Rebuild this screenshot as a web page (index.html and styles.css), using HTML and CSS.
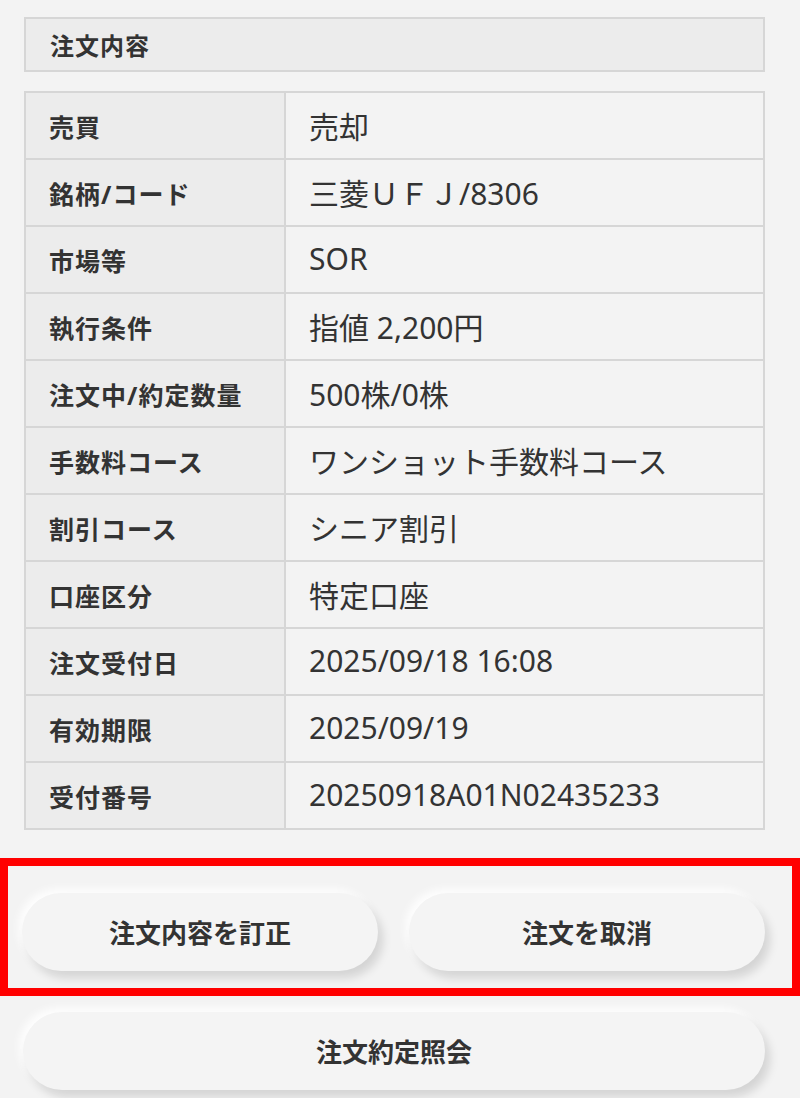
FILE: index.html
```html
<!DOCTYPE html>
<html lang="ja">
<head>
  <meta charset="UTF-8">
  <meta name="viewport" content="width=device-width, initial-scale=1.0">
  <title>注文内容</title>
  <link rel="stylesheet" href="styles.css">
</head>
<body>

  <div class="container">
    <div class="section-title">注文内容</div>

    <table class="order-table">
      <tr><th>売買</th><td>売却</td></tr>
      <tr><th>銘柄/コード</th><td>三菱ＵＦＪ/8306</td></tr>
      <tr><th>市場等</th><td>SOR</td></tr>
      <tr><th>執行条件</th><td>指値 2,200円</td></tr>
      <tr><th>注文中/約定数量</th><td>500株/0株</td></tr>
      <tr><th>手数料コース</th><td>ワンショット手数料コース</td></tr>
      <tr><th>割引コース</th><td>シニア割引</td></tr>
      <tr><th>口座区分</th><td>特定口座</td></tr>
      <tr><th>注文受付日</th><td>2025/09/18 16:08</td></tr>
      <tr><th>有効期限</th><td>2025/09/19</td></tr>
      <tr><th>受付番号</th><td>20250918A01N02435233</td></tr>
    </table>
  </div>

  <!-- 枠で囲んだボタン -->
  <div class="highlight">
    <div class="btn-row">
      <button class="btn">注文内容を訂正</button>
      <button class="btn">注文を取消</button>
    </div>
  </div>

  <div class="bottom">
    <button class="btn btn-wide">注文約定照会</button>
  </div>

</body>
</html>
```

FILE: styles.css
```css
* {
  margin: 0;
  padding: 0;
  box-sizing: border-box;
}

body {
  font-family: "Noto Sans", "Noto Sans CJK JP", sans-serif;
  background-color: #f3f3f3;
  color: #333;
  width: 800px;
  height: 1098px;
  overflow: hidden;
}

.container {
  padding: 17px 35px 0 24px;
}

.section-title {
  height: 55px;
  display: flex;
  align-items: center;
  padding-left: 24px;
  background-color: #ececec;
  border: 2px solid #d6d6d6;
  font-size: 24px;
  font-weight: 700;
  letter-spacing: 1px;
}

.order-table {
  width: 100%;
  margin-top: 19px;
  border-collapse: collapse;
  border: 2px solid #d6d6d6;
}

.order-table th,
.order-table td {
  height: 67px;
  border: 2px solid #d6d6d6;
  padding-left: 23px;
  text-align: left;
  vertical-align: middle;
}

.order-table th {
  width: 260px;
  background-color: #ececec;
  font-size: 25px;
  font-weight: 700;
  letter-spacing: 1px;
}

.order-table td {
  background-color: #f3f3f3;
  font-size: 30px;
  font-weight: 400;
  padding-bottom: 2px;
}

/* 赤枠 */
.highlight {
  margin-top: 28px;
  border: 8px solid #ff0000;
  padding: 27px 27px 17px 14px;
}

.btn-row {
  display: grid;
  grid-template-columns: 1fr 1fr;
  gap: 31px;
}

.btn {
  height: 78px;
  border: none;
  border-radius: 39px;
  background-color: #f4f4f4;
  color: #333;
  font-family: "Noto Sans", "Noto Sans CJK JP", sans-serif;
  font-size: 26px;
  font-weight: 700;
  box-shadow: 5px 7px 10px rgba(0, 0, 0, 0.13), -4px -4px 8px rgba(255, 255, 255, 0.9);
  cursor: pointer;
}

.bottom {
  padding: 16px 35px 0 23px;
}

.btn-wide {
  width: 100%;
}
```
